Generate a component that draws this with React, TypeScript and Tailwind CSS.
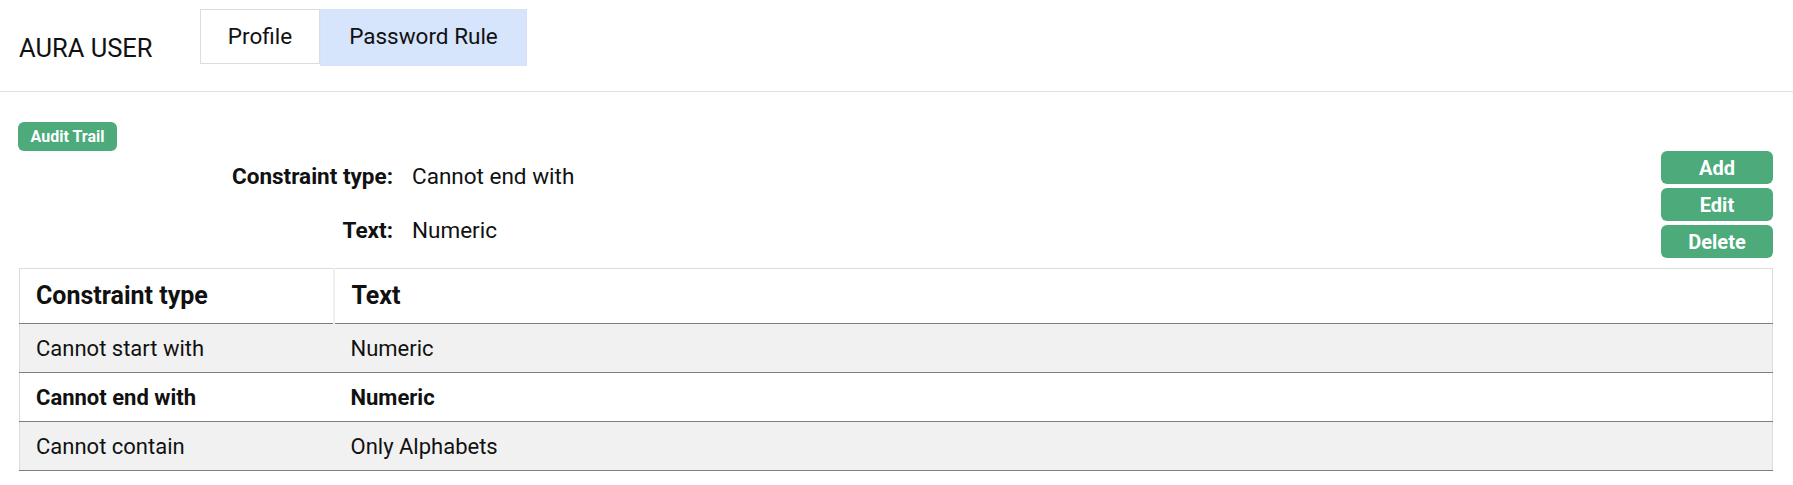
import React from "react";

const rows = [
	{ type: "Cannot start with", text: "Numeric", selected: false },
	{ type: "Cannot end with", text: "Numeric", selected: true },
	{ type: "Cannot contain", text: "Only Alphabets", selected: false },
];

const App = () => {
	return (
		<div className="min-h-screen bg-white text-[#111111]" style={{ fontFamily: "Roboto, 'Liberation Sans', sans-serif" }}>
			<header className="flex h-[92px] border-b border-[#e0e0e0] pl-[19px]">
				<div className="pt-[33px] text-[25.5px] leading-[30px] w-[181px]">AURA USER</div>
				<nav className="flex pt-[9px] h-fit">
					<button className="flex h-[55px] w-[120px] items-center justify-center border border-[#dddddd] bg-white text-[22.5px]">
						Profile
					</button>
					<button className="flex h-[57px] w-[207px] items-center justify-center border border-[#d4e2fa] bg-[#d6e4fc] pb-[2px] text-[22.5px]">
						Password Rule
					</button>
				</nav>
			</header>

			<main className="pl-[18px] pr-5 pt-[30px]">
				<span className="inline-flex h-[29px] w-[99px] items-center justify-center rounded-[6px] bg-[#4caa7b] text-[16px] font-bold text-white">
					Audit Trail
				</span>

				<div className="flex justify-between">
					<div className="grid grid-cols-[375px_auto] gap-x-[19px] text-[22.5px]">
						<div className="flex h-[52px] items-center justify-end font-bold">Constraint type:</div>
						<div className="flex h-[52px] items-center">Cannot end with</div>
						<div className="flex h-[52px] items-center justify-end font-bold">Text:</div>
						<div className="flex h-[52px] items-center">Numeric</div>
					</div>
					<div className="flex w-[112px] flex-col gap-1">
						{["Add", "Edit", "Delete"].map((label) => (
							<button
								key={label}
								className="h-[33px] rounded-[6px] bg-[#4caa7b] text-[20px] font-bold text-white"
							>
								{label}
							</button>
						))}
					</div>
				</div>

				<table className="mt-[10px] ml-px w-[1754px] border border-[#dcdcdc] border-collapse text-[22px]">
					<thead>
						<tr className="h-[55px] border-b border-[#7f7f7f] text-left text-[25px]">
							<th className="w-[314px] border-r-2 border-[#f0f0f0] pl-4 font-bold">Constraint type</th>
							<th className="pl-[17px] font-bold">Text</th>
						</tr>
					</thead>
					<tbody>
						{rows.map((r, i) => (
							<tr
								key={r.type}
								className={`h-[49px] border-b border-[#7f7f7f] ${i % 2 === 0 ? "bg-[#f1f1f1]" : "bg-white"} ${r.selected ? "font-bold" : ""}`}
							>
								<td className="pl-4">{r.type}</td>
								<td className="pl-[17px]">{r.text}</td>
							</tr>
						))}
					</tbody>
				</table>
			</main>
		</div>
	);
};

export default App;
